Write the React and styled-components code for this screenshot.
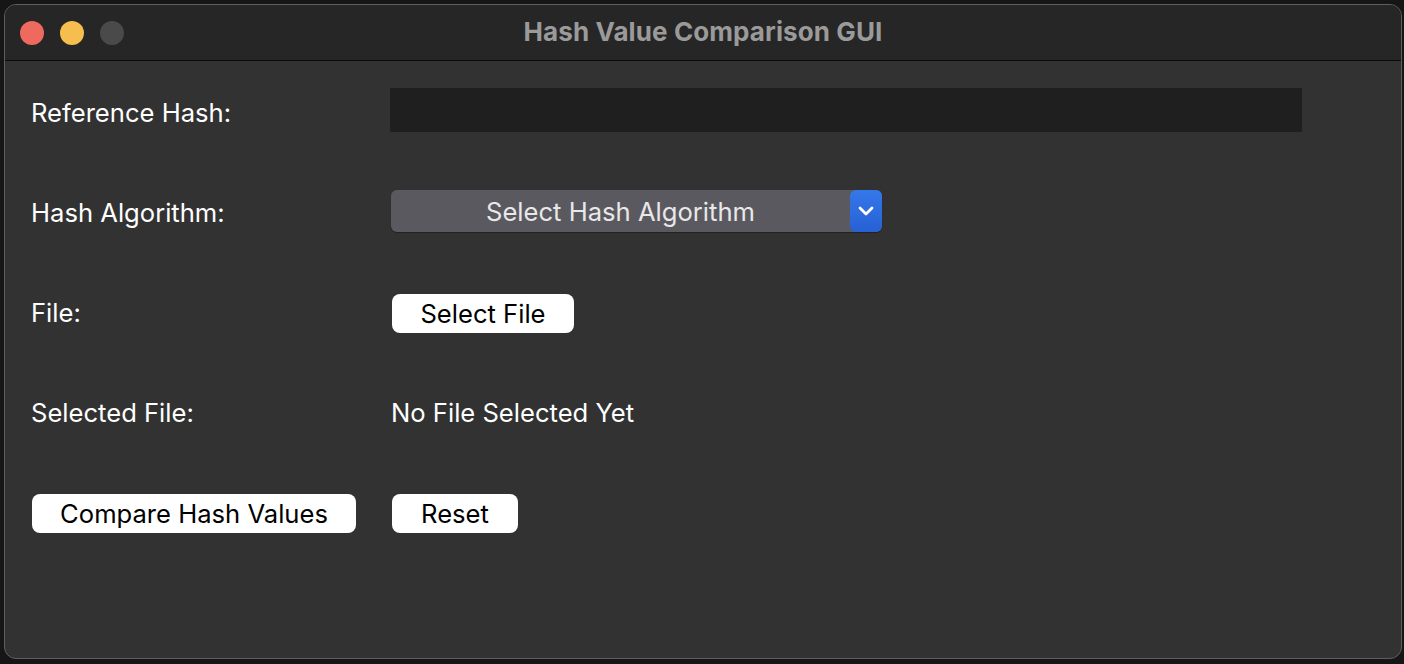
import React from "react";
import styled, { createGlobalStyle } from "styled-components";

const GlobalStyle = createGlobalStyle`
  html, body {
    margin: 0;
    padding: 0;
    background: #161616;
  }
  body {
    font-family: Inter, "Liberation Sans", sans-serif;
    -webkit-font-smoothing: antialiased;
  }
`;

const Screen = styled.div`
  width: 1404px;
  height: 664px;
  padding: 4px 2px 5px 4px;
  box-sizing: border-box;
  display: flex;
`;

const Window = styled.div`
  flex: 1;
  display: flex;
  flex-direction: column;
  border: 1px solid #5e5e5e;
  border-radius: 12px;
  overflow: hidden;
  background: #323232;
`;

const TitleBar = styled.div`
  height: 55px;
  flex: none;
  display: grid;
  grid-template-columns: 1fr auto 1fr;
  align-items: center;
  background: #262626;
  border-bottom: 1px solid #0b0b0b;
  padding: 0 15px;
`;

const Lights = styled.div`
  display: flex;
  gap: 16px;
  align-items: center;
`;

const Light = styled.span`
  width: 24px;
  height: 24px;
  border-radius: 50%;
  background: ${(p) => p.$color};
`;

const Title = styled.div`
  font-size: 26px;
  font-weight: 700;
  color: #9a9a9a;
  letter-spacing: 0.1px;
  margin-top: -2px;
`;

const Content = styled.div`
  display: grid;
  grid-template-columns: 359px 1fr;
  grid-auto-rows: 100px;
  align-items: center;
  padding: 1px 0 0 26px;
`;

const Label = styled.div`
  font-size: 25.6px;
  color: #ffffff;
`;

const Entry = styled.div`
  width: 912px;
  height: 44px;
  margin-top: -4px;
  background: #1f1f1f;
`;

const Select = styled.div`
  width: 491px;
  height: 42px;
  margin: -2px 0 0 1px;
  display: flex;
  background: #5b5960;
  border-radius: 6px;
  box-shadow: 0 1px 1px rgba(0, 0, 0, 0.35);
`;

const SelectText = styled.div`
  flex: 1;
  display: flex;
  align-items: center;
  justify-content: center;
  font-size: 25.6px;
  color: #e8e8e8;
`;

const SelectArrow = styled.div`
  width: 32px;
  display: flex;
  align-items: center;
  justify-content: center;
  border-radius: 6px;
  background: linear-gradient(#3577ea, #2761d4);
`;

const Button = styled.div`
  width: ${(p) => p.$w}px;
  height: 39px;
  margin: 2px 0 0 ${(p) => p.$ml || 0}px;
  display: flex;
  align-items: center;
  justify-content: center;
  background: #ffffff;
  border-radius: 8px;
  font-size: 25.6px;
  color: #000000;
`;

const Value = styled.div`
  font-size: 25.6px;
  color: #ffffff;
  margin-left: 1px;
`;

export default function App() {
  return (
    <>
      <GlobalStyle />
      <Screen>
        <Window>
          <TitleBar>
            <Lights>
              <Light $color="#ee6a5f" />
              <Light $color="#f5be4f" />
              <Light $color="#4a4a4a" />
            </Lights>
            <Title>Hash Value Comparison GUI</Title>
            <div />
          </TitleBar>
          <Content>
            <Label>Reference Hash:</Label>
            <Entry />

            <Label>Hash Algorithm:</Label>
            <Select>
              <SelectText>Select Hash Algorithm</SelectText>
              <SelectArrow>
                <svg width="16" height="12" viewBox="0 0 16 12">
                  <path
                    d="M2 3 L8 9 L14 3"
                    fill="none"
                    stroke="#ffffff"
                    strokeWidth="2.8"
                    strokeLinecap="round"
                    strokeLinejoin="round"
                  />
                </svg>
              </SelectArrow>
            </Select>

            <Label>File:</Label>
            <Button $w={182} $ml={2}>Select File</Button>

            <Label>Selected File:</Label>
            <Value>No File Selected Yet</Value>

            <Button $w={324} $ml={1}>Compare Hash Values</Button>
            <Button $w={126} $ml={2}>Reset</Button>
          </Content>
        </Window>
      </Screen>
    </>
  );
}
